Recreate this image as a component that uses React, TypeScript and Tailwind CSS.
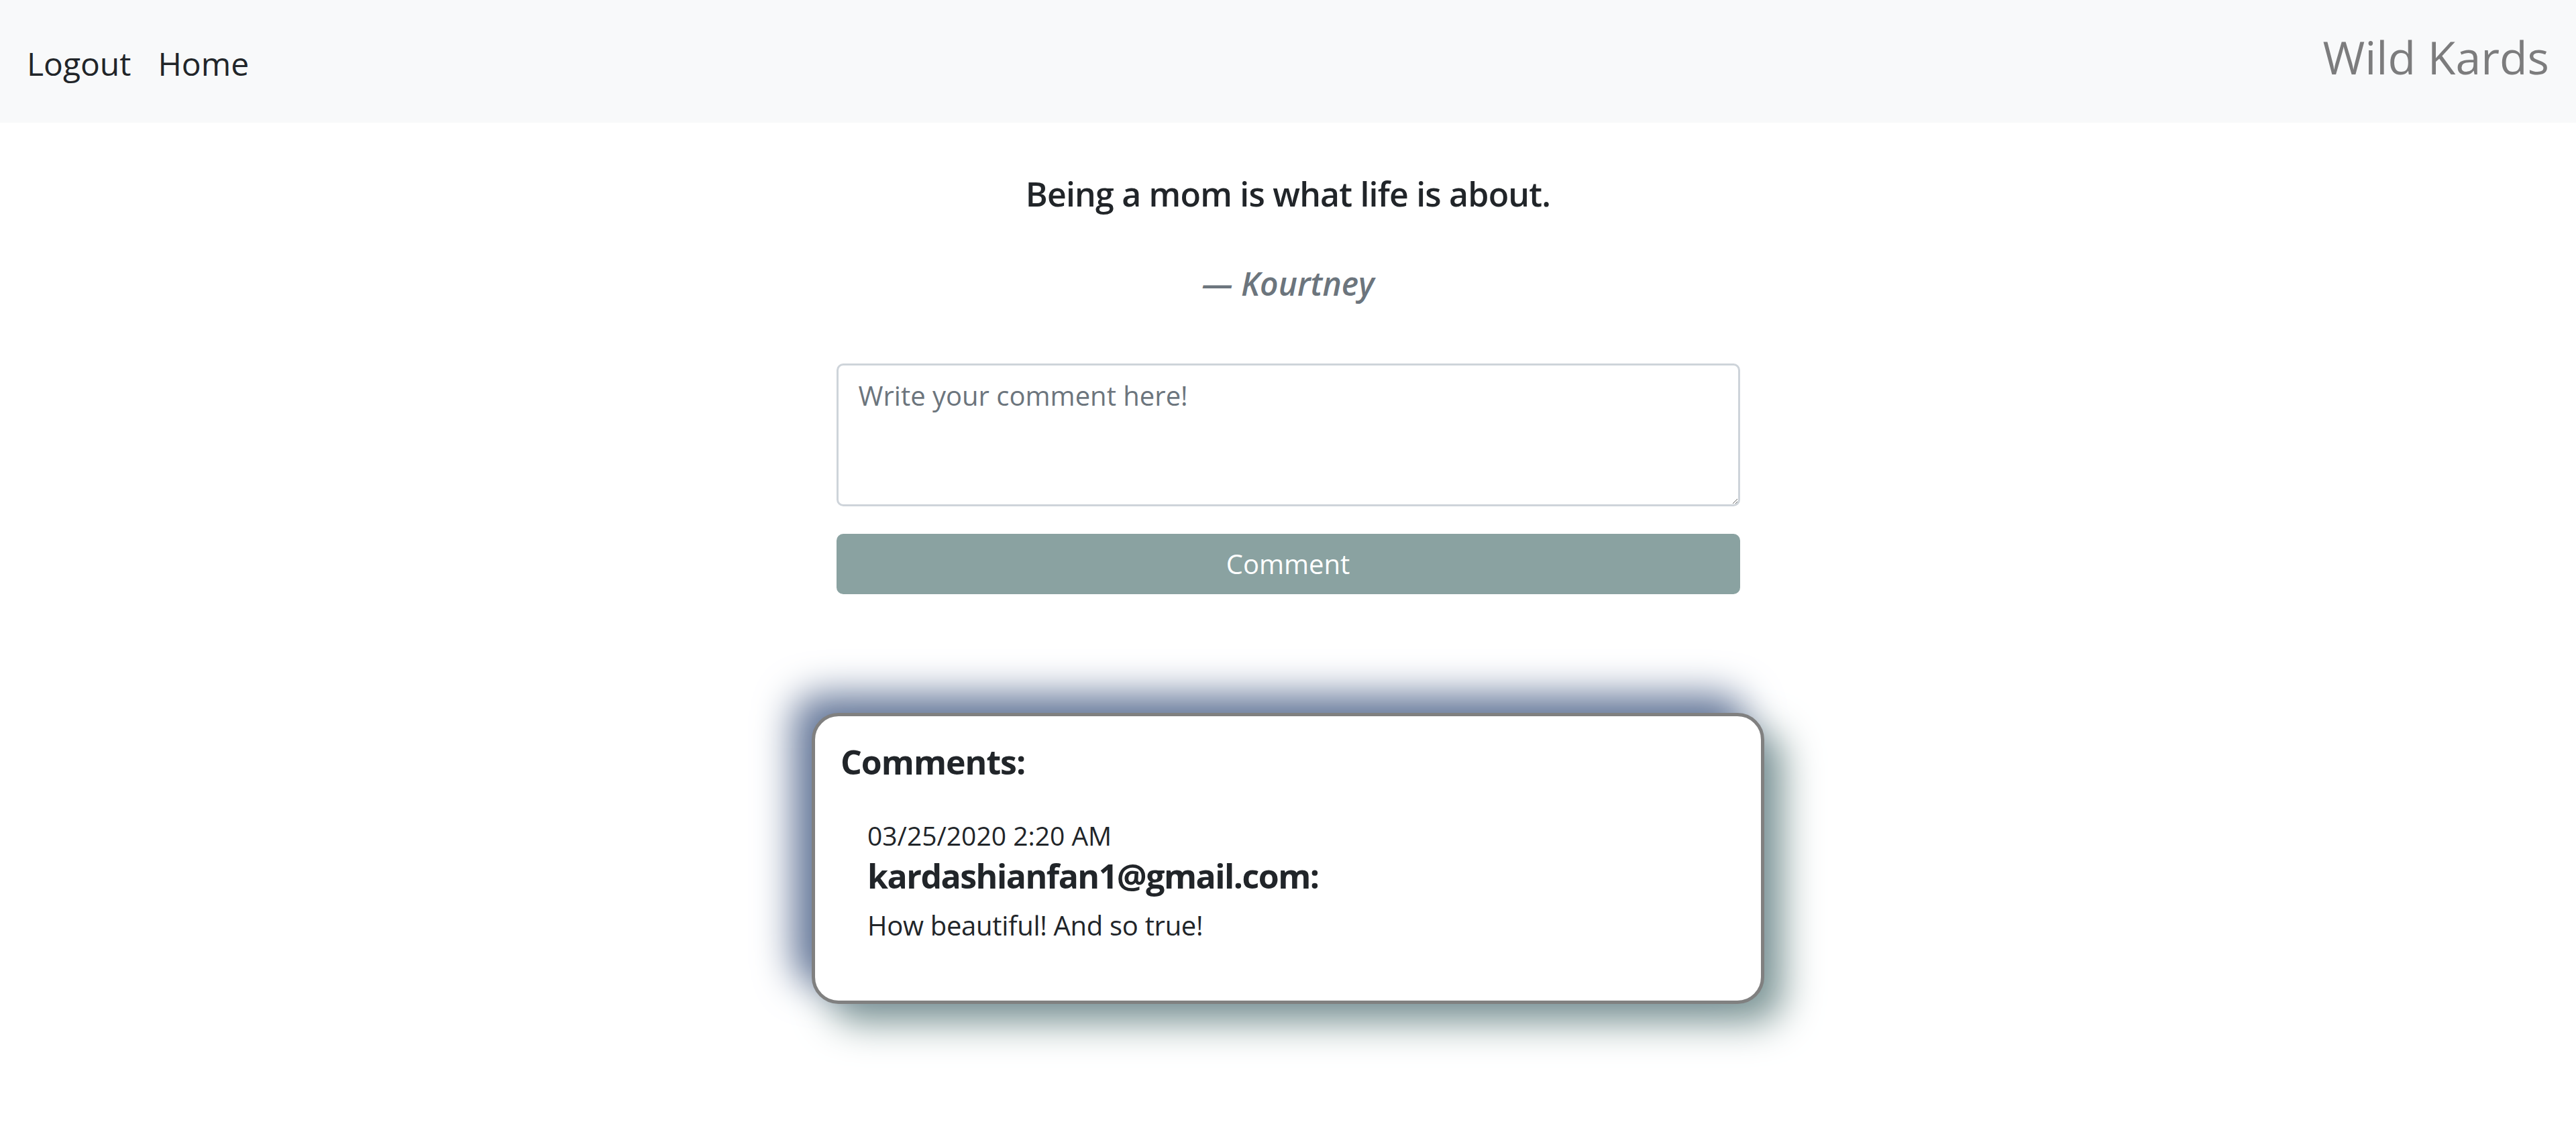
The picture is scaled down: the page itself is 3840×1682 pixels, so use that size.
const font = { fontFamily: '"Open Sans", "Noto Sans", sans-serif' }

type Comment = {
  date: string
  email: string
  text: string
}

const comments: Comment[] = [
  {
    date: "03/25/2020 2:20 AM",
    email: "kardashianfan1@gmail.com:",
    text: "How beautiful! And so true!",
  },
]

function NavBar() {
  return (
    <nav className="flex h-[183px] items-center justify-between bg-[#f8f9fa] px-[40px]">
      <div className="mt-[6px] flex items-center gap-[40px] text-[48px] leading-[75px] text-[#212529]">
        <a href="#">Logout</a>
        <a href="#">Home</a>
      </div>

      <a href="#" className="mb-[14px] text-[68px] leading-[100px] text-[#7c7c7d]">
        Wild Kards
      </a>
    </nav>
  )
}

function CommentCard() {
  return (
    <div className="mt-[177px] w-[1420px] rounded-[40px] border-[5px] border-[#808080] bg-white px-[38px] pb-[82px] pt-[38px] shadow-[-28px_-28px_56px_#66789a,28px_28px_56px_#7e9796]">
      <h5 className="text-[50px] font-bold leading-[60px] tracking-[-1px] text-[#212529]">
        Comments:
      </h5>

      {comments.map((comment) => (
        <div key={comment.email} className="ml-[40px] mt-[50px] text-[#212529]">
          <p className="text-[39px] leading-[60px]">{comment.date}</p>

          <p className="text-[50px] font-bold leading-[60px] tracking-[-1.5px]">
            {comment.email}
          </p>

          <p className="mt-[14px] text-[40px] font-medium leading-[60px] tracking-[-0.3px]">
            {comment.text}
          </p>
        </div>
      ))}
    </div>
  )
}

export default function App() {
  return (
    <div className="min-h-screen bg-white" style={font}>
      <NavBar />

      <main className="flex flex-col items-center pb-[100px]">
        <blockquote className="mt-[69px] flex flex-col items-center">
          <p className="text-[50px] font-semibold leading-[75px] tracking-[-0.8px] text-[#212529]">
            Being a mom is what life is about.
          </p>

          <footer className="mt-[58px] text-[48px] font-semibold italic leading-[75px] text-[#6c757d]">
            — Kourtney
          </footer>
        </blockquote>

        <form className="mt-[82px] flex w-[1347px] flex-col gap-[41px]">
          <textarea
            placeholder="Write your comment here!"
            className="h-[213px] w-full rounded-[10px] border-[3px] border-[#ced4da] px-[30px] py-[15px] text-[40px] leading-[60px] text-[#495057] placeholder:text-[#6c757d] outline-none"
          />

          <button
            type="button"
            className="h-[90px] w-full rounded-[10px] bg-[#8aa2a1] text-[40px] leading-[60px] text-white"
          >
            Comment
          </button>
        </form>

        <CommentCard />
      </main>
    </div>
  )
}
